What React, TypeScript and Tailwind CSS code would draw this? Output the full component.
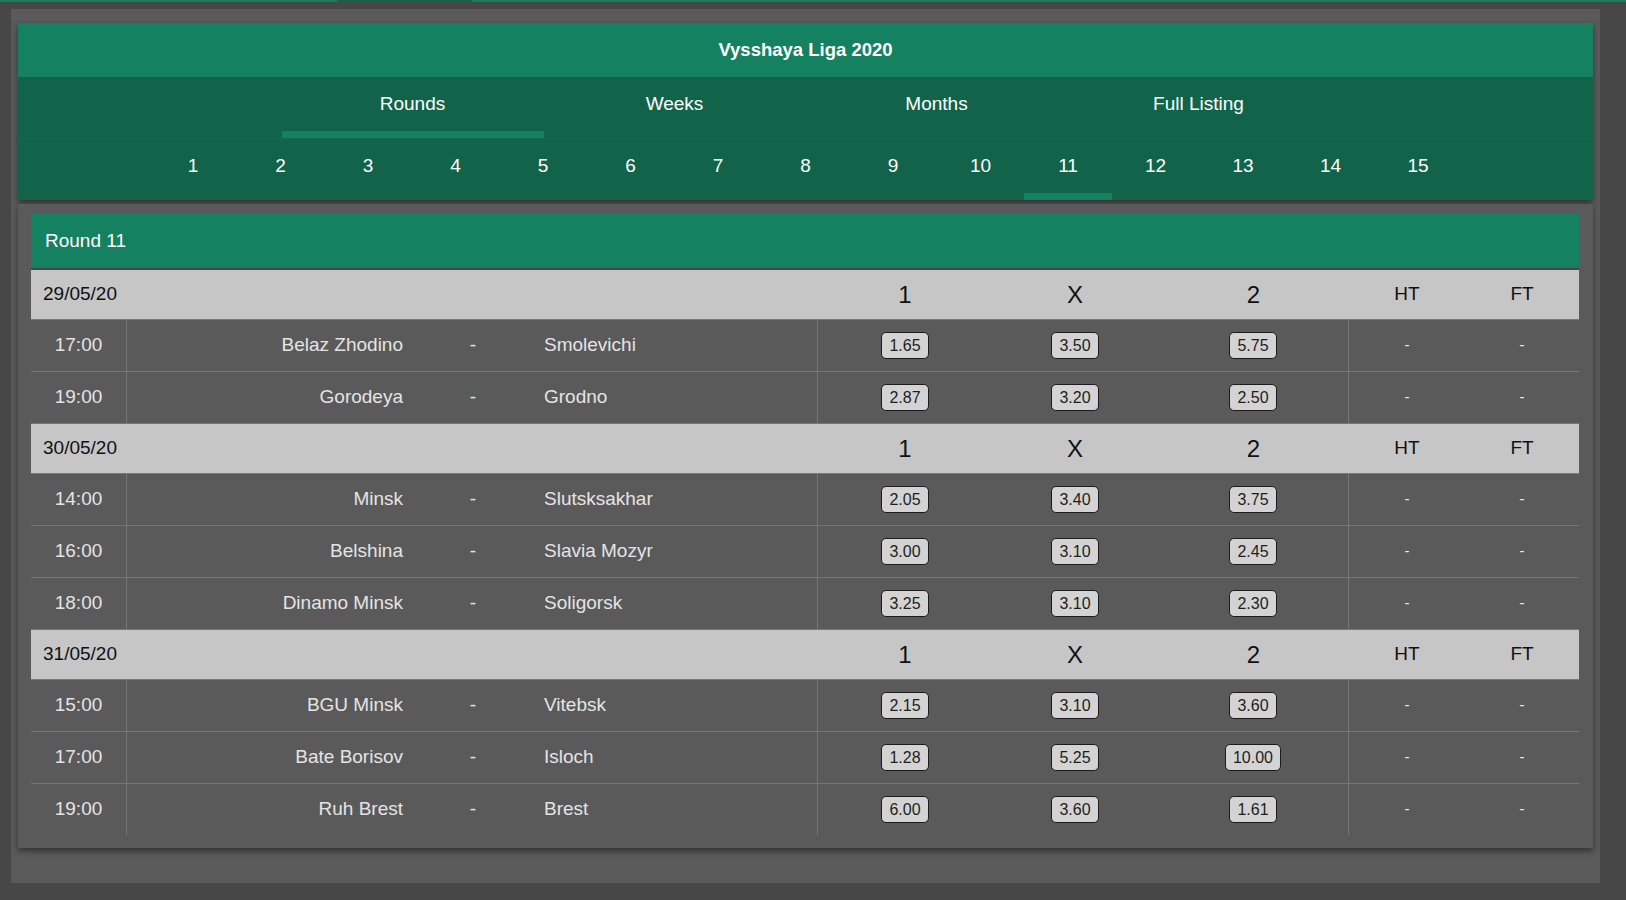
import React from "react";

type Match = { time: string; home: string; away: string; o1: string; ox: string; o2: string };
type Day = { date: string; matches: Match[] };

const days: Day[] = [
  {
    date: "29/05/20",
    matches: [
      { time: "17:00", home: "Belaz Zhodino", away: "Smolevichi", o1: "1.65", ox: "3.50", o2: "5.75" },
      { time: "19:00", home: "Gorodeya", away: "Grodno", o1: "2.87", ox: "3.20", o2: "2.50" },
    ],
  },
  {
    date: "30/05/20",
    matches: [
      { time: "14:00", home: "Minsk", away: "Slutsksakhar", o1: "2.05", ox: "3.40", o2: "3.75" },
      { time: "16:00", home: "Belshina", away: "Slavia Mozyr", o1: "3.00", ox: "3.10", o2: "2.45" },
      { time: "18:00", home: "Dinamo Minsk", away: "Soligorsk", o1: "3.25", ox: "3.10", o2: "2.30" },
    ],
  },
  {
    date: "31/05/20",
    matches: [
      { time: "15:00", home: "BGU Minsk", away: "Vitebsk", o1: "2.15", ox: "3.10", o2: "3.60" },
      { time: "17:00", home: "Bate Borisov", away: "Isloch", o1: "1.28", ox: "5.25", o2: "10.00" },
      { time: "19:00", home: "Ruh Brest", away: "Brest", o1: "6.00", ox: "3.60", o2: "1.61" },
    ],
  },
];

const tabs = ["Rounds", "Weeks", "Months", "Full Listing"];
const rounds = Array.from({ length: 15 }, (_, i) => i + 1);

function Odd({ v }: { v: string }) {
  return (
    <div className="h-[27px] px-[7px] flex items-center justify-center bg-[#d3d3d3] border border-[#1c1c1c] rounded-[5px] text-[16px] leading-none text-[#1e1e1e]">
      {v}
    </div>
  );
}

export default function App() {
  return (
    <div className="w-[1626px] h-[900px] bg-[#474747] overflow-hidden font-['Liberation_Sans',Arial,sans-serif]">
      <div className="flex h-[2px]">
        <div className="w-[337px] bg-[#158060]" />
        <div className="w-[135px] bg-[#11644a]" />
        <div className="flex-1 bg-[#158060]" />
      </div>
      <div className="ml-[11px] mt-[7px] w-[1589px] h-[874px] bg-[#5a5a5a] px-[7px] pt-[14px]">
        {/* Header card */}
        <div className="w-[1575px] shadow-[0_3px_6px_rgba(0,0,0,0.45)]">
          <div className="h-[54px] bg-[#148160] flex items-center justify-center text-white font-bold text-[18.5px]">
            Vysshaya Liga 2020
          </div>
          <div className="h-[62px] bg-[#11644a] flex justify-center border-b border-[#136a4f]">
            {tabs.map((t, i) => (
              <div key={t} className="w-[262px] flex flex-col">
                <div className="flex-1 flex items-center justify-center text-white text-[19px]">{t}</div>
                <div className={i === 0 ? "h-[7px] bg-[#148160]" : "h-[7px]"} />
              </div>
            ))}
          </div>
          <div className="h-[61px] bg-[#11644a] flex justify-center">
            {rounds.map((r) => (
              <div key={r} className="w-[87.5px] flex flex-col">
                <div className="flex-1 flex items-center justify-center text-white text-[19px]">{r}</div>
                <div className={r === 11 ? "h-[7px] bg-[#148160]" : "h-[7px]"} />
              </div>
            ))}
          </div>
        </div>

        {/* Content card */}
        <div className="mt-[4px] w-[1575px] h-[644px] bg-[#5a5a5a] shadow-[0_3px_6px_rgba(0,0,0,0.45)] pt-[10px] pl-[13px] pr-[14px]">
          <div className="h-[54px] bg-[#148160] flex items-center pl-[14px] text-white text-[19px]">Round 11</div>
          <div className="h-[2px] bg-[#464646]" />
          {days.map((d) => (
            <div key={d.date}>
              <div className="h-[50px] bg-[#c6c6c6] border-b border-[#7a7a7a] flex items-center text-[#111]">
                <div className="w-[96px] pl-[12px] text-[19px]">{d.date}</div>
                <div className="w-[691px]" />
                <div className="w-[174px] text-center text-[24px]">1</div>
                <div className="w-[166px] text-center text-[24px]">X</div>
                <div className="w-[191px] text-center text-[24px]">2</div>
                <div className="w-[116px] text-center text-[19px]">HT</div>
                <div className="w-[114px] text-center text-[19px]">FT</div>
              </div>
              {d.matches.map((m, i) => {
                const last = d.date === "31/05/20" && i === d.matches.length - 1;
                return (
                  <div
                    key={i}
                    className={
                      last
                        ? "h-[51px] flex text-[#e4e4e4] text-[19px]"
                        : "h-[52px] flex text-[#e4e4e4] text-[19px] border-b border-[#767676]"
                    }
                  >
                    <div className="w-[96px] border-r border-[#767676] flex items-center justify-center">{m.time}</div>
                    <div className="w-[286px] flex items-center justify-end pr-[10px]">{m.home}</div>
                    <div className="w-[120px] flex items-center justify-center">-</div>
                    <div className="w-[285px] border-r border-[#767676] flex items-center pl-[11px]">{m.away}</div>
                    <div className="w-[174px] flex items-center justify-center">
                      <Odd v={m.o1} />
                    </div>
                    <div className="w-[166px] flex items-center justify-center">
                      <Odd v={m.ox} />
                    </div>
                    <div className="w-[191px] border-r border-[#767676] flex items-center justify-center">
                      <Odd v={m.o2} />
                    </div>
                    <div className="w-[116px] flex items-center justify-center text-[15px] text-[#eeeeee]">-</div>
                    <div className="w-[114px] flex items-center justify-center text-[15px] text-[#eeeeee]">-</div>
                  </div>
                );
              })}
            </div>
          ))}
        </div>
      </div>
    </div>
  );
}
